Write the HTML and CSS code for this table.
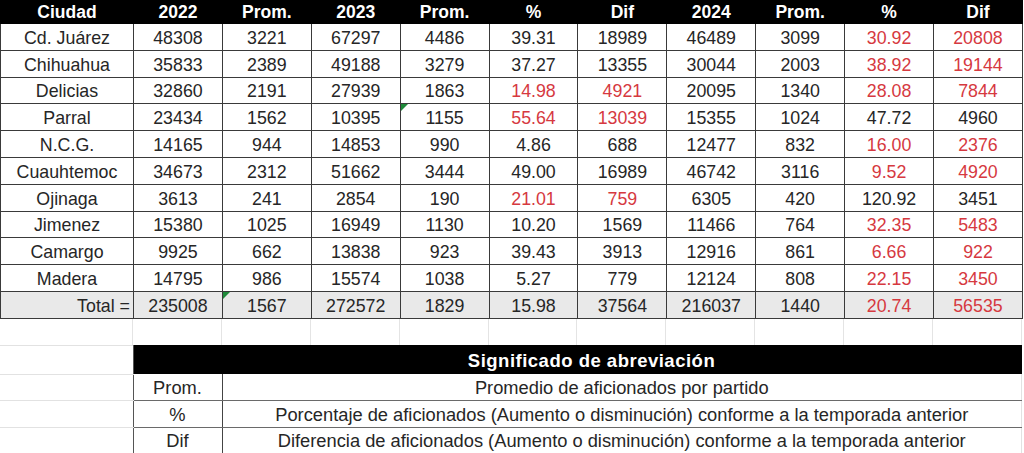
FILE: index.html
```html
<!DOCTYPE html>
<html lang="es">
<head>
<meta charset="utf-8">
<title>Asistencia</title>
<link rel="stylesheet" href="styles.css">
</head>
<body>
<table class="data">
  <colgroup>
    <col class="c-city"><col><col><col><col><col><col><col><col><col><col>
  </colgroup>
  <thead>
    <tr><th>Ciudad</th><th>2022</th><th>Prom.</th><th>2023</th><th>Prom.</th><th>%</th><th>Dif</th><th>2024</th><th>Prom.</th><th>%</th><th>Dif</th></tr>
  </thead>
  <tbody>
    <tr><td>Cd. Juárez</td><td>48308</td><td>3221</td><td>67297</td><td>4486</td><td>39.31</td><td>18989</td><td>46489</td><td>3099</td><td class="red">30.92</td><td class="red">20808</td></tr>
    <tr><td>Chihuahua</td><td>35833</td><td>2389</td><td>49188</td><td>3279</td><td>37.27</td><td>13355</td><td>30044</td><td>2003</td><td class="red">38.92</td><td class="red">19144</td></tr>
    <tr><td>Delicias</td><td>32860</td><td>2191</td><td>27939</td><td>1863</td><td class="red">14.98</td><td class="red">4921</td><td>20095</td><td>1340</td><td class="red">28.08</td><td class="red">7844</td></tr>
    <tr><td>Parral</td><td>23434</td><td>1562</td><td>10395</td><td class="flag">1155</td><td class="red">55.64</td><td class="red">13039</td><td>15355</td><td>1024</td><td>47.72</td><td>4960</td></tr>
    <tr><td>N.C.G.</td><td>14165</td><td>944</td><td>14853</td><td>990</td><td>4.86</td><td>688</td><td>12477</td><td>832</td><td class="red">16.00</td><td class="red">2376</td></tr>
    <tr><td>Cuauhtemoc</td><td>34673</td><td>2312</td><td>51662</td><td>3444</td><td>49.00</td><td>16989</td><td>46742</td><td>3116</td><td class="red">9.52</td><td class="red">4920</td></tr>
    <tr><td>Ojinaga</td><td>3613</td><td>241</td><td>2854</td><td>190</td><td class="red">21.01</td><td class="red">759</td><td>6305</td><td>420</td><td>120.92</td><td>3451</td></tr>
    <tr><td>Jimenez</td><td>15380</td><td>1025</td><td>16949</td><td>1130</td><td>10.20</td><td>1569</td><td>11466</td><td>764</td><td class="red">32.35</td><td class="red">5483</td></tr>
    <tr><td>Camargo</td><td>9925</td><td>662</td><td>13838</td><td>923</td><td>39.43</td><td>3913</td><td>12916</td><td>861</td><td class="red">6.66</td><td class="red">922</td></tr>
    <tr><td>Madera</td><td>14795</td><td>986</td><td>15574</td><td>1038</td><td>5.27</td><td>779</td><td>12124</td><td>808</td><td class="red">22.15</td><td class="red">3450</td></tr>
    <tr class="total"><td class="right">Total =</td><td>235008</td><td class="flag">1567</td><td>272572</td><td>1829</td><td>15.98</td><td>37564</td><td>216037</td><td>1440</td><td class="red">20.74</td><td class="red">56535</td></tr>
  </tbody>
</table>

<div class="blank-row">
  <div class="blank-cell first"></div><div class="blank-cell"></div><div class="blank-cell"></div><div class="blank-cell"></div><div class="blank-cell"></div><div class="blank-cell"></div><div class="blank-cell"></div><div class="blank-cell"></div><div class="blank-cell"></div><div class="blank-cell"></div><div class="blank-cell"></div>
</div>

<table class="legend">
  <colgroup>
    <col class="l-empty"><col class="l-key"><col>
  </colgroup>
  <tr class="l-head"><td class="empty"></td><th colspan="2">Significado de abreviación</th></tr>
  <tr class="l-row"><td class="empty"></td><td class="key">Prom.</td><td class="desc">Promedio de aficionados por partido</td></tr>
  <tr class="l-row"><td class="empty"></td><td class="key">%</td><td class="desc">Porcentaje de aficionados (Aumento o disminución) conforme a la temporada anterior</td></tr>
  <tr class="l-row"><td class="empty"></td><td class="key">Dif</td><td class="desc">Diferencia de aficionados (Aumento o disminución) conforme a la temporada anterior</td></tr>
</table>
</body>
</html>
```

FILE: styles.css
```css
html, body {
  margin: 0;
  padding: 0;
  background: #ffffff;
}

body {
  font-family: "Liberation Sans", Arial, sans-serif;
  color: #262626;
  width: 1024px;
  height: 453px;
  overflow: hidden;
}

.data {
  border-collapse: collapse;
  table-layout: fixed;
  width: 1022px;
}

.data col {
  width: 88.9px;
}

.data col.c-city {
  width: 133px;
}

.data thead tr {
  height: 23px;
}

.data th {
  background: #000000;
  color: #ffffff;
  font-weight: bold;
  font-size: 17.5px;
  padding: 0;
  text-align: center;
  line-height: 20px;
  border: 1px solid #000;
}

.data tbody tr {
  height: 26.8px;
}

.data td {
  border: 1px solid #3a3a3a;
  padding: 2px 0 0 0;
  text-align: center;
  font-size: 17.8px;
  line-height: 20px;
  position: relative;
}

.data td.red {
  color: #d6393f;
}

.data td.right {
  text-align: right;
  padding-right: 3px;
}

.data tr.total td {
  background: #e9e9e9;
}

.data td.flag::before {
  content: "";
  position: absolute;
  left: 0;
  top: 0;
  width: 0;
  height: 0;
  border-top: 7px solid #1f8a3a;
  border-right: 7px solid transparent;
}

.blank-row {
  display: grid;
  grid-template-columns: 133px repeat(10, 88.9px);
  height: 26px;
}

.blank-cell {
  border-right: 1px solid #e4e4e4;
}

.legend {
  border-collapse: collapse;
  table-layout: fixed;
  width: 1022px;
  font-size: 18.3px;
}

.legend col.l-empty {
  width: 133px;
}

.legend col.l-key {
  width: 89px;
}

.legend td.empty {
  border-top: 1px solid #e2e2e2;
  border-bottom: 1px solid #e2e2e2;
  border-right: 1px solid #555;
  padding: 0;
}

.legend .l-head {
  height: 29px;
}

.legend .l-head th {
  background: #000;
  color: #fff;
  font-weight: bold;
  padding: 2px 0 0 28px;
  text-align: center;
  font-size: 18.5px;
  letter-spacing: 0.5px;
  line-height: 20px;
}

.legend .l-row {
  height: 26.5px;
}

.legend td.key,
.legend td.desc {
  padding: 1px 0 0 0;
  text-align: center;
  line-height: 20px;
  border-bottom: 1px solid #6a6a6a;
  border-left: 1px solid #444;
}

.legend td.key {
  font-size: 18.3px;
}

.legend td.desc {
  border-right: 1px solid #e2e2e2;
}
```
